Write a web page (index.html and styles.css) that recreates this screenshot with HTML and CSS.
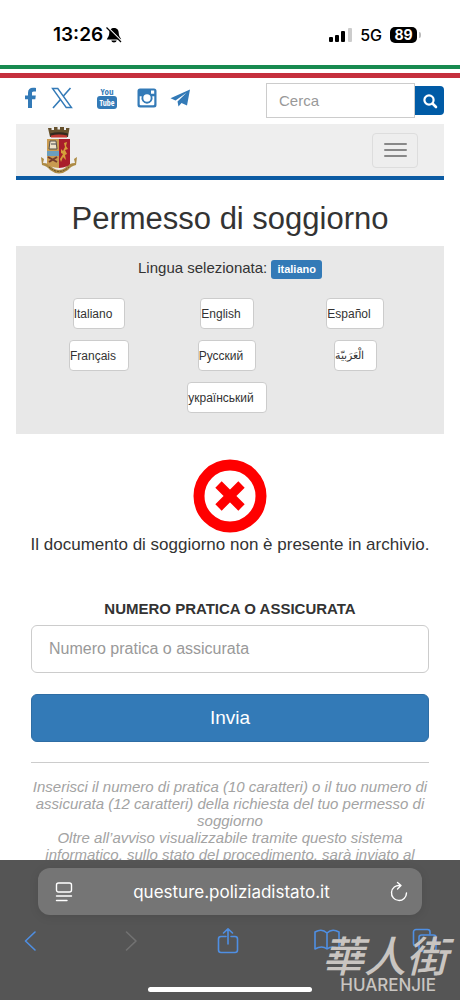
FILE: index.html
```html
<!DOCTYPE html>
<html lang="it">
<head>
  <meta charset="UTF-8">
  <title>Permesso di soggiorno</title>
  <meta name="viewport" content="width=device-width, initial-scale=1.0">
  <link rel="stylesheet" href="styles.css">
</head>
<body>
  <!-- Status bar -->
  <div class="status-bar">
    <div class="status-left">
      <span class="clock">13:26</span>
      <svg class="bell" viewBox="0 0 16 16" width="16" height="16">
        <path d="M8 1C4.500 1 3.300 3.500 3.300 6C3.300 9 1.500 10.500 .8 12.500H15.200C14.500 10.500 12.700 9 12.700 6C12.700 3.500 11.500 1 8 1ZM5.200 13.400A2.900 2.900 0 0 0 10.800 13.400Z" fill="#000"/>
        <path d="M1.500 0L16 14.500" stroke="#fff" stroke-width="1.200"/>
        <path d="M.5 .5L15 15" stroke="#000" stroke-width="1.200"/>
      </svg>
    </div>
    <div class="status-right">
      <svg viewBox="0 0 23 14" width="23" height="14">
        <rect x="0" y="9" width="4" height="5" rx="1"/>
        <rect x="6" y="7" width="4" height="7" rx="1"/>
        <rect x="12" y="3" width="4" height="11" rx="1"/>
        <rect x="19" y="0" width="4" height="14" rx="1" fill="#ccc"/>
      </svg>
      <span class="network">5G</span>
      <span class="battery">89</span>
    </div>
  </div>

  <!-- Page -->
  <div class="page">
    <div class="flag"></div>
    <div class="container">
      <header class="top-row">
        <nav class="social">
          <a href="#" aria-label="Facebook">
            <svg viewBox="0 0 22 22" width="22" height="22"><path d="M17 1V4.500H14.800C13.200 4.500 13 5.300 13 6.300V8.500H16.800L16.300 12.200H13V21H9V12.200H6V8.500H9V5.800C9 2.600 11 .8 14 .8C15.500 .8 16.500 .9 17 1Z"/></svg>
          </a>
          <a href="#" aria-label="X">
            <svg viewBox="0 0 22 22" width="22" height="22"><path d="M1.500 1.500H6.800L20.500 20.500H15.200Z" fill="none" stroke="#337ab7" stroke-width="1.400"/><path d="M19.500 1L12.200 9.200M9.700 12.200L2 21" stroke="#337ab7" stroke-width="1.600"/></svg>
          </a>
          <a href="#" class="youtube" aria-label="YouTube"><span>You</span><b>Tube</b></a>
          <a href="#" aria-label="Instagram">
            <svg viewBox="0 0 22 22" width="22" height="22"><path fill-rule="evenodd" d="M4 1.500H18A2.500 2.500 0 0 1 20.500 4V18A2.500 2.500 0 0 1 18 20.500H4A2.500 2.500 0 0 1 1.500 18V4A2.500 2.500 0 0 1 4 1.500ZM15 3.600V6.800H18.200V3.600ZM3.700 9.300V17.300Q3.700 18.300 4.700 18.300H17.300Q18.300 18.300 18.300 17.300V9.300H16.300A5.600 5.600 0 1 1 5.700 9.300ZM11 7.300A3.700 3.700 0 1 0 11 14.700A3.700 3.700 0 1 0 11 7.300Z"/></svg>
          </a>
          <a href="#" aria-label="Telegram">
            <svg viewBox="0 0 22 22" width="22" height="22"><path d="M21 2.500L18 18.500L12.500 16L9.500 19.500L8.500 14.500L17.500 5.800L6.500 13.500L1.500 11.200Z"/></svg>
          </a>
        </nav>
        <form class="search">
          <input type="text" placeholder="Cerca" aria-label="Cerca">
          <button type="submit" aria-label="Avvia la ricerca">
            <svg viewBox="0 0 16 16" width="16" height="16"><circle cx="7" cy="7" r="4.600" fill="none" stroke="#fff" stroke-width="2.200"/><path d="M10.500 10.500L14 14" stroke="#fff" stroke-width="2.600" stroke-linecap="round"/></svg>
          </button>
        </form>
      </header>

      <div class="navbar">
        <svg class="crest" viewBox="0 0 38 49" width="38" height="49">
          <!-- mural crown -->
          <path d="M8 2H11.500V4H14V1H17.500V3.500H20V1H24V4H26V2H29.500L28 11H10Z" fill="#66512d"/>
          <path d="M10 7.500Q19 5 28 7.500L27.500 11H10.500Z" fill="#332b20"/>
          <path d="M11 9.500Q19 7.500 27 9.500V11.500H11Z" fill="#c23a32"/>
          <!-- ribbon -->
          <path d="M1 31L4 33L3 37Q9 37 13 42Q19 46 25 42Q29 37 35 37L34 33L37 31L36 39Q31 40 28 44Q19 51 10 44Q7 40 2 39Z" fill="#ad8b45"/>
          <path d="M9 41Q19 50 29 41" fill="none" stroke="#665025" stroke-width="1" stroke-dasharray="2 1"/>
          <!-- shield -->
          <path d="M7 13H19V42Q9 41 7 38Z" fill="#c99b51"/>
          <path d="M19 13H30V38Q28 41 19 42Z" fill="#a91e2b"/>
          <rect x="7" y="25" width="12" height="5" fill="#6b9ebc"/>
          <path d="M10 15H16L17 23H9Z" fill="#eee4ca" stroke="#55524b" stroke-width="1"/>
          <path d="M11 18H16" stroke="#45454b"/>
          <path d="M8 31L17 36M17 31L9 36" stroke="#743c2c" stroke-width="2"/>
          <path d="M24 17L27 16L26 20L28 23L25 24L27 28L25 29L26 34L23 31L21 36L20 33L23 28L21 27V23L23 25L25 21Z" fill="#d6a03a"/>
        </svg>
        <button class="menu-toggle" aria-label="Menu"><span></span><span></span><span></span></button>
      </div>

      <h1>Permesso di soggiorno</h1>

      <section class="languages">
        <p>Lingua selezionata: <span class="label">italiano</span></p>
        <div class="language-grid">
          <button lang="it">Italiano</button>
          <button lang="en">English</button>
          <button lang="es">Español</button>
          <button lang="fr">Français</button>
          <button lang="ru">Русский</button>
          <button class="arabic" lang="ar">الْعَرَبيّة</button>
          <button class="last" lang="uk">український</button>
        </div>
      </section>

      <main class="content">
        <div class="result">
          <svg viewBox="0 0 74 74" width="74" height="74">
            <circle cx="37" cy="37" r="31" fill="none" stroke="#f00" stroke-width="11"/>
            <path d="M25.500 25.500L48.500 48.500M48.500 25.500L25.500 48.500" stroke="#f00" stroke-width="9"/>
          </svg>
          <p>Il documento di soggiorno non è presente in archivio.</p>
        </div>
        <form class="practice-form">
          <label for="pratica">NUMERO PRATICA O ASSICURATA</label>
          <input type="text" id="pratica" placeholder="Numero pratica o assicurata">
          <button type="submit">Invia</button>
        </form>
        <hr>
        <p class="notes">Inserisci il numero di pratica (10 caratteri) o il tuo numero di assicurata (12 caratteri) della richiesta del tuo permesso di soggiorno<br>Oltre all’avviso visualizzabile tramite questo sistema informatico, sullo stato del procedimento, sarà inviato al</p>
      </main>
    </div>
  </div>

  <!-- Browser toolbar -->
  <footer class="browser">
    <div class="address-bar">
      <button aria-label="Formato pagina">
        <svg viewBox="0 0 18 22" width="18" height="22" fill="none" stroke="#fff" stroke-width="1.400" stroke-linecap="round"><rect x="1.500" y="2" width="15" height="9" rx="2"/><path d="M1.500 15H16.500M1.500 19.500H12"/></svg>
      </button>
      <span>questure.poliziadistato.it</span>
      <button aria-label="Ricarica">
        <svg viewBox="0 0 18 22" width="18" height="22" fill="none" stroke="#fff" stroke-width="1.400" stroke-linecap="round" stroke-linejoin="round"><path d="M10 4.500A7.500 7.500 0 1 0 16.500 12M7.500 1.500L11 4.600L7.500 8"/></svg>
      </button>
    </div>
    <nav class="browser-nav">
      <button aria-label="Indietro"><svg viewBox="0 0 28 28" width="28" height="28"><path d="M18 5L8.500 14L18 23"/></svg></button>
      <button class="disabled" aria-label="Avanti" disabled><svg viewBox="0 0 28 28" width="28" height="28"><path d="M9.500 5L19 14L9.500 23"/></svg></button>
      <button aria-label="Condividi"><svg viewBox="0 0 28 28" width="28" height="28"><path d="M10 9.500H5A2.500 2.500 0 0 0 2.500 12V23A2.500 2.500 0 0 0 5 25.500H19A2.500 2.500 0 0 0 21.500 23V12A2.500 2.500 0 0 0 19 9.500H15M12 17V2M7.500 6L12 1.800L16.500 6"/></svg></button>
      <button aria-label="Preferiti"><svg viewBox="0 0 28 28" width="28" height="28"><path d="M11 6Q6 1 -1 5V22Q6 18 11 22Q16 18 23 22V5Q16 1 11 6V22"/></svg></button>
      <button aria-label="Schede"><svg viewBox="0 0 28 28" width="28" height="28"><path d="M3 19H1A2.500 2.500 0 0 1 -1.500 16.500V5A2.500 2.500 0 0 1 1 2.500H12.500A2.500 2.500 0 0 1 15 5V7"/><rect x="4" y="8" width="17" height="16" rx="2.500"/></svg></button>
    </nav>
    <div class="home-indicator"></div>
    <div class="watermark"><span class="watermark-name">華人街</span><span class="watermark-site">HUARENJIE</span></div>
  </footer>
</body>
</html>
```
FILE: styles.css
```css
* {
  box-sizing: border-box;
}

body {
  display: flex;
  flex-direction: column;
  height: 100vh;
  margin: 0;
  overflow: hidden;
  background: #fff;
  color: #333;
  font-family: "Liberation Sans", Arial, sans-serif;
  font-size: 15px;
}

button,
input {
  font-family: inherit;
}

button {
  margin: 0;
  padding: 0;
  border: none;
  background: none;
}

svg {
  display: block;
  overflow: visible;
}

p {
  margin: 0;
}

input::placeholder {
  color: #999;
  opacity: 1;
}

/* Status bar */
.status-bar {
  display: flex;
  flex-shrink: 0;
  justify-content: space-between;
  height: 65px;
  padding: 4px 43px 0 53px;
  color: #000;
  font-family: Inter, sans-serif;
}

.status-left,
.status-right {
  display: flex;
  align-items: center;
}

.status-left {
  gap: 3px;
}

.clock {
  font-size: 19px;
  font-weight: 600;
}

.status-right {
  gap: 8px;
}

.network {
  font-size: 16px;
  font-weight: 500;
}

.battery {
  position: relative;
  width: 27px;
  height: 16px;
  border-radius: 5px;
  background: #000;
  color: #fff;
  font-size: 14px;
  font-weight: 700;
  line-height: 16px;
  text-align: center;
}

.battery::after {
  content: "";
  position: absolute;
  top: 5px;
  right: -4px;
  width: 2px;
  height: 6px;
  border-radius: 0 2px 2px 0;
  background: #bbb;
}

/* Page */
.page {
  flex: 1;
  min-height: 0;
  overflow: hidden;
}

.flag {
  height: 13px;
  border-top: 4px solid #178a50;
  border-bottom: 5px solid #c52f3d;
}

.container {
  padding: 0 16px;
}

.top-row {
  display: flex;
  justify-content: space-between;
  height: 46px;
}

.social {
  display: flex;
  align-items: flex-start;
  padding: 9px 0 0 3px;
}

.social a {
  display: block;
  width: 22px;
  margin-right: 11px;
  color: #337ab7;
  text-decoration: none;
}

.social a:nth-child(1) {
  margin-right: 10px;
}

.social a:nth-child(2) {
  margin-right: 23px;
}

.social a:nth-child(3) {
  margin-right: 18px;
}

.social svg {
  fill: #337ab7;
}

.youtube {
  font-family: "Open Sans Condensed", "DejaVu Sans Condensed", sans-serif;
  font-size: 9px;
  font-weight: bold;
  line-height: 9px;
  text-align: center;
}

.youtube span,
.youtube b {
  display: block;
}

.youtube b {
  height: 13px;
  margin: 0 1px;
  border-radius: 3px;
  background: #337ab7;
  color: #fff;
  font-size: 8px;
  line-height: 13px;
}

.search {
  display: flex;
  align-items: center;
  height: 45px;
}

.search input {
  width: 149px;
  height: 35px;
  padding: 0 12px;
  border: 1px solid #ccc;
  border-radius: 0;
  font-size: 15px;
}

.search button {
  display: flex;
  align-items: center;
  justify-content: center;
  width: 29px;
  height: 29px;
  border-radius: 0 4px 4px 0;
  background: #005ba6;
}

.navbar {
  display: flex;
  align-items: center;
  justify-content: space-between;
  height: 56px;
  padding: 0 26px 0 24px;
  border-bottom: 4px solid #0b5ba3;
  background: #eee;
}

.menu-toggle {
  display: flex;
  flex-direction: column;
  align-items: center;
  justify-content: center;
  gap: 4px;
  width: 46px;
  height: 35px;
  border: 1px solid #ddd;
  border-radius: 4px;
}

.menu-toggle span {
  width: 23px;
  height: 2px;
  border-radius: 1px;
  background: #888;
}

h1 {
  margin: 19px 0 8px;
  font-size: 31px;
  font-weight: 400;
  line-height: 39px;
  text-align: center;
}

.languages {
  padding: 12px 0 21px;
  background: #e8e8e8;
  text-align: center;
}

.languages p {
  line-height: 20px;
}

.label {
  display: inline-block;
  padding: 0 6px;
  border-radius: 3px;
  background: #337ab7;
  color: #fff;
  font-size: 11px;
  font-weight: bold;
  line-height: 19px;
}

.language-grid {
  display: grid;
  grid-template-columns: repeat(3, 1fr);
  gap: 11px 0;
  justify-items: center;
  padding: 19px 25px 0 19px;
}

.language-grid button {
  height: 31px;
  padding: 0 12px 0 0;
  border: 1px solid #ccc;
  border-radius: 4px;
  background: #fff;
  color: #333;
  font-size: 12px;
}

.language-grid .arabic {
  font-size: 11px;
}

.language-grid .last {
  grid-column: 1 / -1;
}

.content {
  padding: 25px 15px 0;
  text-align: center;
}

.result svg {
  margin: 0 auto;
}

.result p {
  margin: 0 -15px;
  font-size: 17px;
  line-height: 24px;
}

.practice-form {
  display: flex;
  flex-direction: column;
  margin-top: 42px;
}

.practice-form label {
  font-weight: bold;
  line-height: 20px;
}

.practice-form input {
  height: 48px;
  margin: 6px 0 21px;
  padding: 0 17px;
  border: 1px solid #ccc;
  border-radius: 6px;
  font-size: 16px;
}

.practice-form button {
  height: 48px;
  border: 1px solid #2e6da4;
  border-radius: 6px;
  background: #337ab7;
  color: #fff;
  font-size: 19px;
}

hr {
  margin: 20px 0 15px;
  border: 0;
  border-top: 1px solid #ccc;
}

.notes {
  color: #a3a3a3;
  font-size: 15px;
  font-style: italic;
  line-height: 17px;
}

/* Browser toolbar */
.browser {
  position: relative;
  flex-shrink: 0;
  height: 140px;
  padding: 8px 38px 0;
  background: #555;
}

.address-bar {
  display: flex;
  align-items: center;
  justify-content: space-between;
  height: 47px;
  padding: 0 14px 0 17px;
  border-radius: 12px;
  background: #757575;
  box-shadow: 0 2px 10px rgba(0, 0, 0, 0.1);
  color: #fff;
  font-family: Inter, sans-serif;
  font-size: 17px;
}

.browser-nav {
  display: flex;
  justify-content: space-between;
  margin: 12px -21px 0;
}

.browser-nav svg {
  fill: none;
  stroke: #4f8fe3;
  stroke-width: 1.6;
  stroke-linecap: round;
  stroke-linejoin: round;
}

.browser-nav .disabled svg {
  stroke: #727272;
}

.home-indicator {
  width: 164px;
  height: 5px;
  margin: 32px auto 0;
  border-radius: 3px;
  background: #fff;
}

.watermark {
  position: absolute;
  right: 12px;
  bottom: 6px;
  display: flex;
  flex-direction: column;
  align-items: flex-end;
  color: #c9c5c1;
}

.watermark-name {
  font-family: "Noto Sans CJK TC", sans-serif;
  font-size: 42px;
  font-style: italic;
  font-weight: 500;
  line-height: 44px;
}

.watermark-site {
  margin-right: 12px;
  font-family: Inter, sans-serif;
  font-size: 17px;
  font-weight: 500;
  line-height: 18px;
}
```
